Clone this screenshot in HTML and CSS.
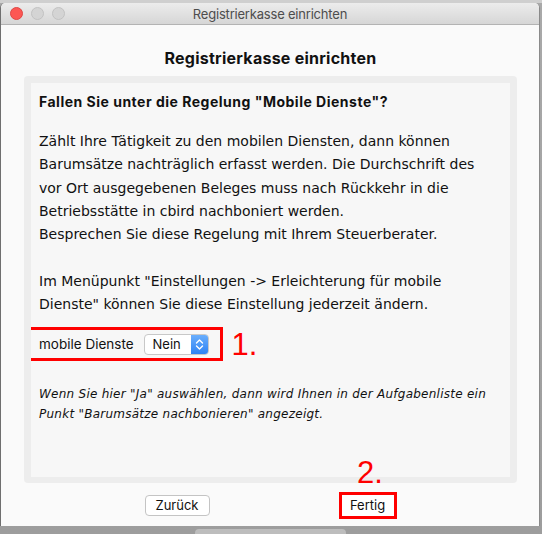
FILE: index.html
```html
<!DOCTYPE html>
<html lang="de">
<head>
    <meta charset="UTF-8">
    <meta name="viewport" content="width=device-width, initial-scale=1.0">
    <title>Registrierkasse einrichten</title>
    <link rel="stylesheet" href="styles.css">
</head>
<body>
    <div class="window">
        <div class="titlebar">
            <div class="lights">
                <span class="light close"></span>
                <span class="light"></span>
                <span class="light"></span>
            </div>
            <div class="title">Registrierkasse einrichten</div>
            <div></div>
        </div>

        <div class="content">
            <h1>Registrierkasse einrichten</h1>
            <div class="panel">
                <div class="panel-inner">
                    <h2>Fallen Sie unter die Regelung "Mobile Dienste"?</h2>
                    <p>Zählt Ihre Tätigkeit zu den mobilen Diensten, dann können<br>
                    Barumsätze nachträglich erfasst werden. Die Durchschrift des<br>
                    vor Ort ausgegebenen Beleges muss nach Rückkehr in die<br>
                    Betriebsstätte in cbird nachboniert werden.<br>
                    Besprechen Sie diese Regelung mit Ihrem Steuerberater.</p>
                    <p>Im Menüpunkt "Einstellungen -&gt; Erleichterung für mobile<br>
                    Dienste" können Sie diese Einstellung jederzeit ändern.</p>

                    <div class="option-row">
                        <div class="mark-box">
                            <span class="label">mobile Dienste</span>
                            <div class="select">
                                <span class="select-value">Nein</span>
                                <span class="select-arrows">
                                    <svg width="9" height="13" viewBox="0 0 9 13">
                                        <path d="M1.5 5 L4.5 2 L7.5 5 M1.5 8 L4.5 11 L7.5 8" fill="none" stroke="#fff" stroke-width="1.4" stroke-linecap="round" stroke-linejoin="round"/>
                                    </svg>
                                </span>
                            </div>
                        </div>
                        <span class="mark">1.</span>
                    </div>

                    <p class="hint">Wenn Sie hier "Ja" auswählen, dann wird Ihnen in der Aufgabenliste ein<br>
                    Punkt "Barumsätze nachbonieren" angezeigt.</p>
                </div>
            </div>

            <div class="buttons">
                <button class="btn">Zurück</button>
                <button class="btn btn-marked">Fertig</button>
                <span class="mark mark-two">2.</span>
            </div>
        </div>
    </div>
    <div class="behind"></div>
</body>
</html>
```

FILE: styles.css
```css
body {
    margin: 0;
    height: 534px;
    overflow: hidden;
    background: linear-gradient(#cfcfcf 0, #cfcfcf 3px, #a9a9a9 3px, #9d9d9d 100%);
    font-family: Inter, "Liberation Sans", Arial, sans-serif;
    font-feature-settings: "calt" 0;
    color: #111;
}

.window {
    margin: 3px 2px 0 0;
    height: 523px;
    background-color: #fafafa;
    border-left: 1px solid #6f6f6f;
    border-right: 1px solid #8a8a8a;
    border-radius: 5px 5px 0 0;
    box-sizing: border-box;
    position: relative;
}

.titlebar {
    height: 21px;
    display: grid;
    grid-template-columns: 1fr auto 1fr;
    align-items: center;
    background: linear-gradient(#ececec, #d6d6d6);
    border-bottom: 1px solid #b3b3b3;
    border-radius: 5px 5px 0 0;
}
.lights { display: flex; gap: 8px; padding-left: 9px; }
.light {
    width: 11px; height: 11px;
    border-radius: 50%;
    background-color: #d4d4d4;
    border: 0.5px solid #c2c2c2;
}
.light.close { background-color: #fc5753; border-color: #df4744; }
.title { font-size: 13px; color: #4d4d4d; letter-spacing: -0.2px; }

.content { padding: 0 22px 0 23px; position: relative; }

h1 {
    margin: 23px 0 8px;
    font-size: 16px;
    font-weight: 700;
    line-height: 20px;
    letter-spacing: 0.25px;
    text-align: center;
}

.panel {
    background-color: #ededed;
    border-radius: 4px;
    padding: 7px 7px 6px;
}
.panel-inner {
    background-color: #f7f7f7;
    height: 394px;
    padding: 0 8px;
    box-sizing: border-box;
    overflow: hidden;
}
.panel-inner h2 {
    margin: 0;
    padding-top: 7px;
    font-size: 14px;
    font-weight: 700;
    line-height: 23px;
    letter-spacing: 0.5px;
}
.panel-inner p {
    margin: 0;
    font-family: "DejaVu Sans", sans-serif;
    font-size: 14px;
    line-height: 23.3px;
}
.panel-inner h2 + p { margin-top: 17px; }
.panel-inner p + p { margin-top: 23.3px; }

.option-row {
    display: flex;
    align-items: center;
    margin: 11px 0 0 -12px;
}
.mark-box {
    display: flex;
    align-items: center;
    gap: 10px;
    border: 3px solid #f00;
    height: 34px;
    box-sizing: border-box;
    padding: 0 11px 0 9px;
}
.label { font-size: 13.5px; }
.select {
    display: flex;
    width: 65px;
    height: 21px;
    box-sizing: border-box;
    border: 1px solid #c8c8c8;
    border-radius: 4px;
    background-color: #fff;
    overflow: hidden;
}
.select-value { flex: 1; font-size: 13px; line-height: 19px; padding-left: 8px; }
.select-arrows {
    width: 17px;
    display: flex;
    align-items: center;
    justify-content: center;
    background: linear-gradient(#6aaefc, #2f83f4);
}

.mark {
    color: #f00;
    font-family: "Liberation Sans", Arial, sans-serif;
    font-size: 31px;
    line-height: 31px;
    margin-left: 9px;
}

.panel-inner p.hint {
    margin-top: 23px;
    font-size: 12px;
    font-style: italic;
    line-height: 20px;
    letter-spacing: 0.25px;
}

.buttons {
    display: flex;
    justify-content: center;
    align-items: center;
    gap: 129px;
    height: 28px;
    margin-top: 8px;
    position: relative;
}
.btn {
    font-family: Inter, "Liberation Sans", Arial, sans-serif;
    font-size: 13px;
    background-color: #fff;
    border: 1px solid #c4c4c4;
    border-radius: 4px;
    height: 21px;
    width: 65px;
    padding: 0;
    color: #111;
}
.btn-marked {
    border: 3px solid #f00;
    border-radius: 0;
    height: 27px;
    width: 58px;
}
.mark-two {
    position: absolute;
    left: 333px;
    top: -34px;
    margin: 0;
}

.behind {
    margin: 3px 0 0 195px;
    width: 151px;
    height: 10px;
    background-color: #bdbdbd;
    border-radius: 4px 4px 0 0;
}
```
